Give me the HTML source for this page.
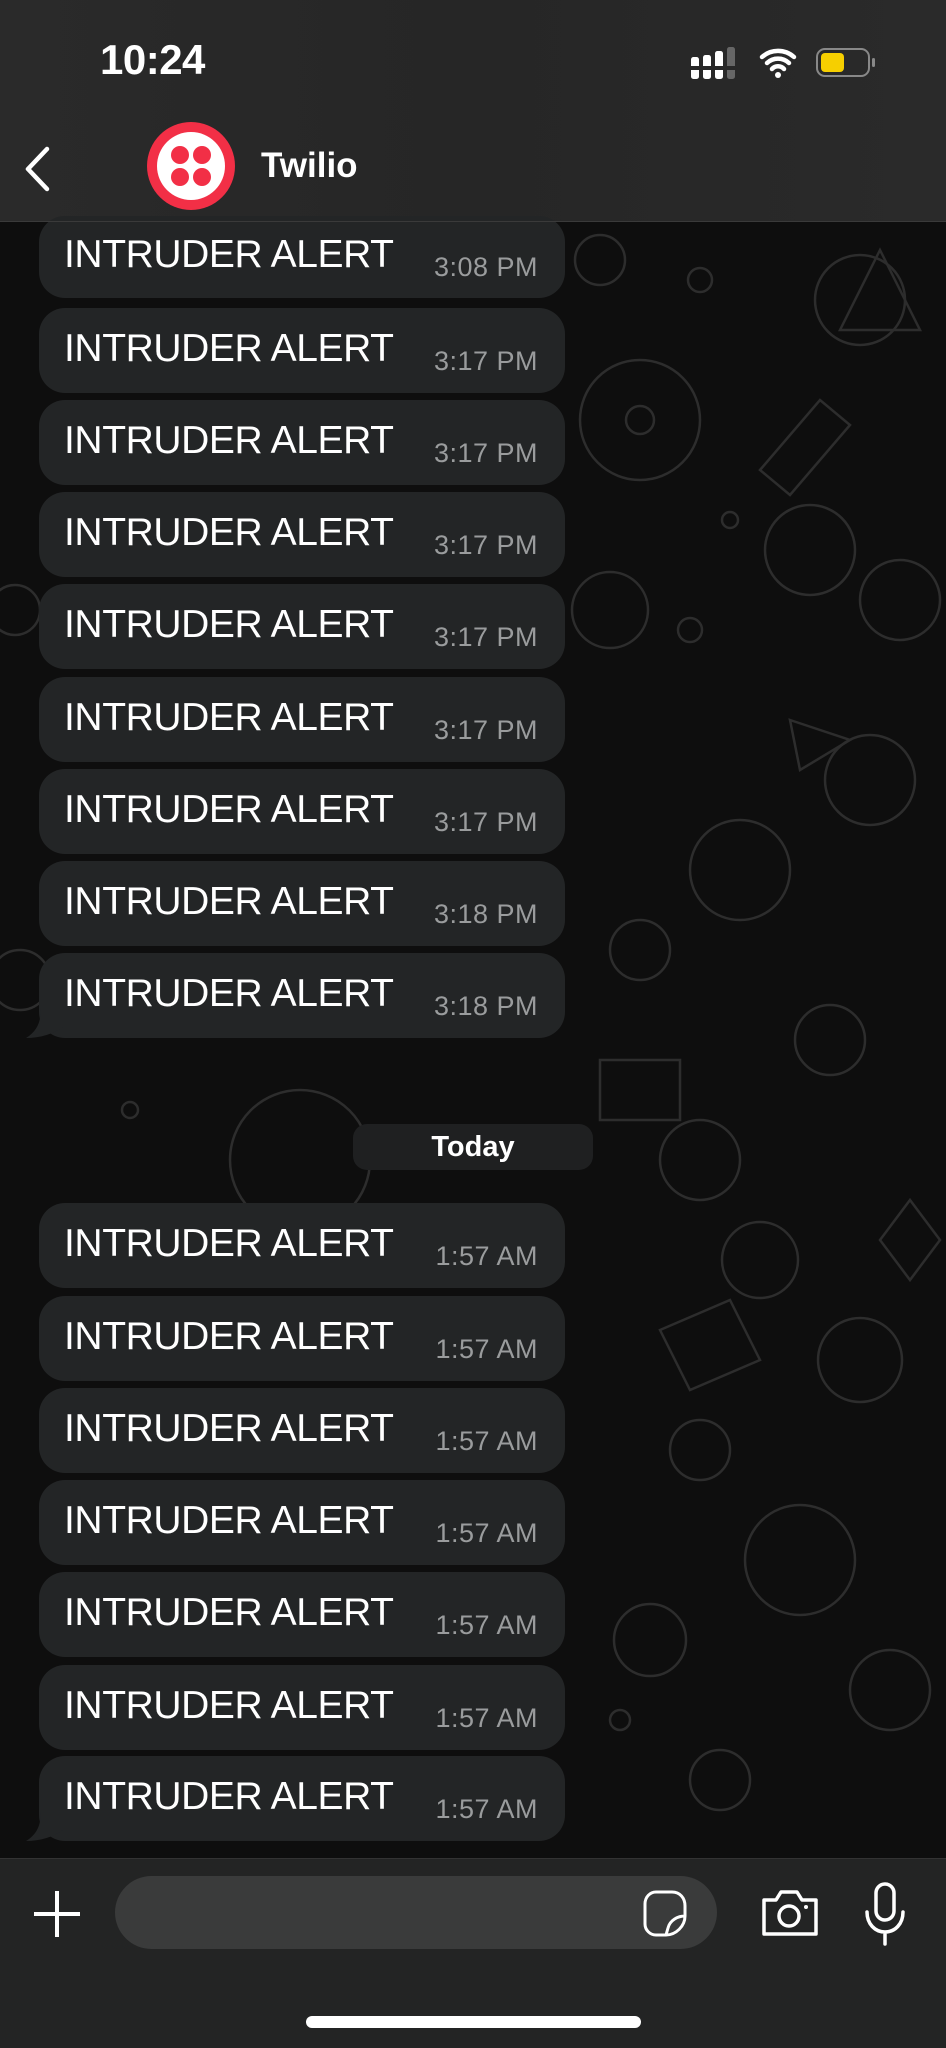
<!DOCTYPE html>
<html><head><meta charset="utf-8"><style>
*{margin:0;padding:0;box-sizing:border-box}
body{width:946px;height:2048px;overflow:hidden;background:#0e0e0e;font-family:"Liberation Sans",sans-serif;position:relative;color:#fff}
.bg{position:absolute;left:0;top:0;width:946px;height:2048px}
.hdr{position:absolute;left:0;top:0;width:946px;height:222px;background:linear-gradient(90deg,#2a2a2a,#262626 50%,#2a2a2a);border-bottom:1px solid #3a3a3a}
.time{position:absolute;left:100px;top:36px;font-size:42px;font-weight:bold;letter-spacing:-0.5px}
.name{position:absolute;left:261px;top:146px;font-size:35px;font-weight:bold}
.b{position:absolute;left:39px;width:526px;height:85px;background:#232526;border-radius:26px}
.b .t{position:absolute;left:25px;top:19px;font-size:39px;letter-spacing:-0.4px;white-space:nowrap}
.b .m{position:absolute;right:27px;top:38px;font-size:27px;color:#9a9c9d;letter-spacing:0.5px}
.tail{position:absolute;width:40px;height:30px}
.pill{position:absolute;left:353px;top:1124px;width:240px;height:46px;background:#1f2021;border-radius:14px;text-align:center;font-size:29px;font-weight:bold;line-height:46px}
.bar{position:absolute;left:0;top:1858px;width:946px;height:190px;background:#232424;border-top:1px solid #333}
.inp{position:absolute;left:115px;top:1876px;width:602px;height:73px;background:#3a3b3b;border-radius:37px}
.home{position:absolute;left:306px;top:2016px;width:335px;height:12px;background:#fff;border-radius:6px}
</style></head><body>
<svg class="bg" viewBox="0 0 946 2048" fill="none" stroke="#2d2d2d" stroke-width="2.5">
<circle cx="640" cy="420" r="60"/><circle cx="640" cy="420" r="14"/><circle cx="810" cy="550" r="45"/><circle cx="900" cy="600" r="40"/><circle cx="610" cy="610" r="38"/><circle cx="730" cy="520" r="8"/><circle cx="690" cy="630" r="12"/><circle cx="740" cy="870" r="50"/><circle cx="870" cy="780" r="45"/><circle cx="640" cy="950" r="30"/><circle cx="830" cy="1040" r="35"/><circle cx="700" cy="1160" r="40"/><circle cx="760" cy="1260" r="38"/><circle cx="860" cy="1360" r="42"/><circle cx="700" cy="1450" r="30"/><circle cx="800" cy="1560" r="55"/><circle cx="650" cy="1640" r="36"/><circle cx="890" cy="1690" r="40"/><circle cx="720" cy="1780" r="30"/><circle cx="300" cy="1160" r="70"/><circle cx="130" cy="1110" r="8"/><circle cx="860" cy="300" r="45"/><circle cx="700" cy="280" r="12"/><circle cx="620" cy="1720" r="10"/><circle cx="20" cy="980" r="30"/><circle cx="15" cy="610" r="25"/><circle cx="600" cy="260" r="25"/>
<path d="M760 470 l60-70 l30 25 l-60 70 z M840 330 l40 -80 l40 80 z M790 720 l60 20 l-50 30 z M660 1330 l70 -30 l30 60 l-70 30z M600 1060 h80 v60 h-80z M880 1240 l30 -40 l30 40 l-30 40z"/>
</svg>
<div class="hdr">
<div class="time">10:24</div>
<svg style="position:absolute;left:690px;top:46px" width="200" height="36" viewBox="0 0 200 36">
<g fill="#fff"><rect x="1" y="11" width="8" height="22" rx="2.5"/><rect x="13" y="9" width="8" height="24" rx="2.5"/><rect x="25" y="5" width="8" height="28" rx="2.5"/><rect x="37" y="1" width="8" height="32" rx="2.5" fill="#666"/></g>
<rect x="0" y="20" width="46" height="4" fill="#282828"/>
<path d="M72 11 a24 24 0 0 1 32 0 M77 17 a16 16 0 0 1 22 0 M82 23 a8 8 0 0 1 12 0" stroke="#fff" stroke-width="4.5" fill="none" stroke-linecap="round"/><circle cx="88" cy="29" r="3" fill="#fff"/>
<rect x="127" y="3" width="52" height="27" rx="8" fill="none" stroke="#888" stroke-width="2"/><rect x="131" y="7" width="23" height="19" rx="4" fill="#f6cf00"/><rect x="182" y="12" width="3" height="9" rx="1.5" fill="#888"/>
</svg>
<svg style="position:absolute;left:20px;top:145px" width="34" height="48" viewBox="0 0 34 48"><path d="M27 4 L8 24 L27 44" stroke="#fff" stroke-width="4.5" fill="none" stroke-linecap="round" stroke-linejoin="round"/></svg>
<svg style="position:absolute;left:147px;top:122px" width="88" height="88" viewBox="0 0 88 88"><circle cx="44" cy="44" r="44" fill="#f22f46"/><circle cx="44" cy="44" r="34" fill="#fff"/><g fill="#f22f46"><circle cx="33" cy="33" r="9"/><circle cx="55" cy="33" r="9"/><circle cx="33" cy="55" r="9"/><circle cx="55" cy="55" r="9"/></g></svg>
<div class="name">Twilio</div>
</div>

<div class="b" style="top:216px;height:82px"><div class="t" style="top:17px">INTRUDER ALERT</div><div class="m" style="top:36px">3:08 PM</div></div>
<div class="hdr" style="height:222px;background:transparent;border:none;border-bottom:1px solid #3a3a3a;pointer-events:none"></div>
<div class="b" style="top:308px"><div class="t">INTRUDER ALERT</div><div class="m">3:17 PM</div></div>
<div class="b" style="top:400px"><div class="t">INTRUDER ALERT</div><div class="m">3:17 PM</div></div>
<div class="b" style="top:492px"><div class="t">INTRUDER ALERT</div><div class="m">3:17 PM</div></div>
<div class="b" style="top:584px"><div class="t">INTRUDER ALERT</div><div class="m">3:17 PM</div></div>
<div class="b" style="top:677px"><div class="t">INTRUDER ALERT</div><div class="m">3:17 PM</div></div>
<div class="b" style="top:769px"><div class="t">INTRUDER ALERT</div><div class="m">3:17 PM</div></div>
<div class="b" style="top:861px"><div class="t">INTRUDER ALERT</div><div class="m">3:18 PM</div></div>
<div class="b" style="top:953px"><div class="t">INTRUDER ALERT</div><div class="m">3:18 PM</div></div>
<svg class="tail" style="left:24px;top:1008px" viewBox="0 0 40 30"><path d="M16 0 C18 14 12 24 2 30 C16 30 30 26 40 18 L40 0Z" fill="#232526"/></svg>

<div class="pill">Today</div>

<div class="b" style="top:1203px"><div class="t">INTRUDER ALERT</div><div class="m">1:57 AM</div></div>
<div class="b" style="top:1296px"><div class="t">INTRUDER ALERT</div><div class="m">1:57 AM</div></div>
<div class="b" style="top:1388px"><div class="t">INTRUDER ALERT</div><div class="m">1:57 AM</div></div>
<div class="b" style="top:1480px"><div class="t">INTRUDER ALERT</div><div class="m">1:57 AM</div></div>
<div class="b" style="top:1572px"><div class="t">INTRUDER ALERT</div><div class="m">1:57 AM</div></div>
<div class="b" style="top:1665px"><div class="t">INTRUDER ALERT</div><div class="m">1:57 AM</div></div>
<div class="b" style="top:1756px"><div class="t">INTRUDER ALERT</div><div class="m">1:57 AM</div></div>
<svg class="tail" style="left:24px;top:1811px" viewBox="0 0 40 30"><path d="M16 0 C18 14 12 24 2 30 C16 30 30 26 40 18 L40 0Z" fill="#232526"/></svg>

<div class="bar"></div>
<svg style="position:absolute;left:32px;top:1889px" width="50" height="50" viewBox="0 0 50 50"><path d="M25 2 V48 M2 25 H48" stroke="#fff" stroke-width="4"/></svg>
<div class="inp"></div>
<svg style="position:absolute;left:642px;top:1890px" width="46" height="48" viewBox="0 0 46 48"><path d="M14 2 H30 C38 2 43 8 43 16 V26 C43 36 34 45 24 45 H14 C8 45 3 40 3 34 V14 C3 7 8 2 14 2Z M43 26 C36 26 28 30 26 38 L24 45" stroke="#fff" stroke-width="3" fill="none" stroke-linejoin="round"/></svg>
<svg style="position:absolute;left:760px;top:1886px" width="60" height="50" viewBox="0 0 60 50"><path d="M4 14 H16 L21 6 H37 L42 14 H56 V48 H4Z" stroke="#fff" stroke-width="3.5" fill="none" stroke-linejoin="round"/><circle cx="29" cy="30" r="10" stroke="#fff" stroke-width="3.5" fill="none"/><circle cx="46" cy="21" r="2" fill="#fff"/></svg>
<svg style="position:absolute;left:862px;top:1882px" width="46" height="64" viewBox="0 0 46 64"><rect x="14" y="2" width="18" height="36" rx="9" stroke="#fff" stroke-width="3.5" fill="none"/><path d="M5 30 C5 42 13 50 23 50 C33 50 41 42 41 30 M23 50 V62" stroke="#fff" stroke-width="3.5" fill="none" stroke-linecap="round"/></svg>
<div class="home"></div>
</body></html>
